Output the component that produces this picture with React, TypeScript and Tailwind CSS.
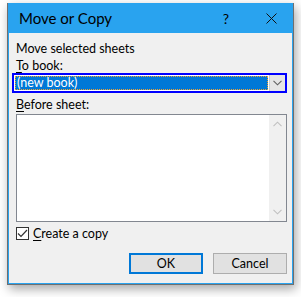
import React from "react";

const font = { fontFamily: 'Lato, "Noto Sans", sans-serif' };

function Chevron({ dir, color }: { dir: "up" | "down"; color: string }) {
  return (
    <svg width="9" height="6" viewBox="0 0 9 6">
      {dir === "down" ? (
        <path d="M0.5 0.8 L4.5 4.8 L8.5 0.8" fill="none" stroke={color} strokeWidth="1.1" />
      ) : (
        <path d="M0.5 5.2 L4.5 1.2 L8.5 5.2" fill="none" stroke={color} strokeWidth="1.1" />
      )}
    </svg>
  );
}

export default function App() {
  return (
    <div className="w-[301px] h-[297px] bg-white overflow-hidden pt-[3px] pl-[7px]" style={font}>
      <div className="w-[287px] h-[282px] border border-t-0 border-[#6f6f6f] bg-[#29a3ef] flex flex-col shadow-[2px_4px_10px_rgba(0,0,0,0.35)]">
        <div className="h-[30px] flex items-center text-[15px] text-black shrink-0">
          <span className="ml-[11px]">Move or Copy</span>
          <span className="ml-auto mr-[37px] text-[14px]">?</span>
          <svg className="mr-[16px]" width="11" height="11" viewBox="0 0 11 11">
            <path d="M0.5 0.5 L10.5 10.5 M10.5 0.5 L0.5 10.5" stroke="#111" strokeWidth="1" />
          </svg>
        </div>
        <div className="flex-1 mx-[1px] mb-[1px] bg-[#f0f0f0] flex flex-col text-[12.5px] text-black leading-[15px]">
          <div className="mt-[8px] ml-[7px]">Move selected sheets</div>
          <div className="mt-[2px] ml-[7px]">
            <span className="underline underline-offset-2">T</span>o book:
          </div>
          <div className="ml-[3px] mr-[5px] h-[20px] border-2 border-[#0000ff] bg-white flex">
            <div className="flex-1 m-[1px] bg-[#0078d7] outline outline-1 outline-dotted outline-[#f0a030] -outline-offset-1 text-white flex items-center pl-[2px] leading-none">
              (new book)
            </div>
            <div className="w-[16px] bg-[#e5e5e5] border-l border-[#cccccc] flex items-center justify-center">
              <Chevron dir="down" color="#606060" />
            </div>
          </div>
          <div className="mt-[4px] ml-[7px]">
            <span className="underline underline-offset-2">B</span>efore sheet:
          </div>
          <div className="mt-[2px] ml-[7px] mr-[5px] h-[108px] border border-[#828790] bg-white flex">
            <div className="flex-1" />
            <div className="w-[17px] bg-[#f0f0f0] flex flex-col items-center justify-between py-[6px]">
              <Chevron dir="up" color="#c0c0c0" />
              <Chevron dir="down" color="#c0c0c0" />
            </div>
          </div>
          <div className="mt-[5px] ml-[7px] flex items-center h-[13px]">
            <div className="w-[13px] h-[13px] border border-[#333] bg-white flex items-center justify-center">
              <svg width="11" height="9" viewBox="0 0 11 9">
                <path d="M1 4.5 L4 7.5 L10 1" fill="none" stroke="#333" strokeWidth="1.2" />
              </svg>
            </div>
            <span className="ml-[4px]">
              <span className="underline underline-offset-2">C</span>reate a copy
            </span>
          </div>
          <div className="mt-[13px] flex justify-end gap-[10px] mr-[5px]">
            <div className="w-[74px] h-[21px] border-2 border-[#0078d7] bg-[#e1e1e1] flex items-center justify-center">
              OK
            </div>
            <div className="w-[74px] h-[21px] border border-[#adadad] bg-[#e1e1e1] flex items-center justify-center">
              Cancel
            </div>
          </div>
        </div>
      </div>
    </div>
  );
}
